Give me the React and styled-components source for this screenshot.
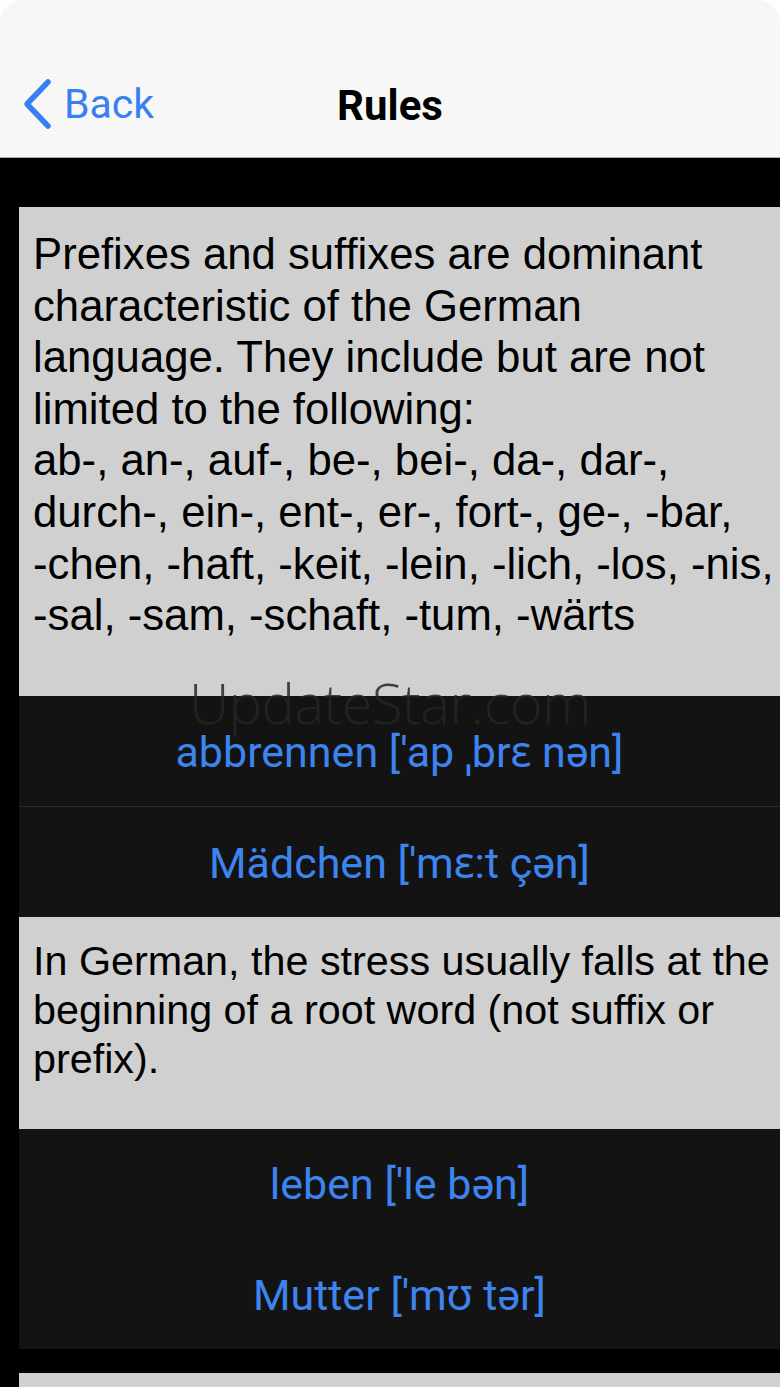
import React from 'react';
import styled, { createGlobalStyle } from 'styled-components';

const GlobalStyle = createGlobalStyle`
  html, body {
    margin: 0;
    padding: 0;
    background: #000;
  }
`;

const Screen = styled.div`
  position: relative;
  width: 780px;
  height: 1387px;
  overflow: hidden;
  background: #000;
  font-family: 'Liberation Sans', Arial, sans-serif;
`;

const NavShell = styled.div`
  background: #fff;
`;

const NavBar = styled.header`
  height: 158px;
  display: grid;
  grid-template-columns: 1fr auto 1fr;
  align-items: end;
  padding: 0 0 27px 0;
  box-sizing: border-box;
  background: #f7f7f8;
  border-radius: 22px 22px 0 0;
  border-bottom: 1px solid #a9a9ab;
`;

const BackButton = styled.button`
  justify-self: start;
  display: flex;
  align-items: center;
  gap: 12px;
  margin-left: 22px;
  padding: 0;
  border: 0;
  background: none;
  color: #3880f0;
  font-family: Roboto, 'Noto Sans', sans-serif;
  font-size: 41px;
  line-height: 48px;
  cursor: pointer;
`;

const Title = styled.h1`
  margin: 0;
  font-family: Roboto, 'Noto Sans', sans-serif;
  font-weight: 700;
  font-size: 42px;
  line-height: 48px;
  color: #000;
`;

const Content = styled.main`
  display: flex;
  flex-direction: column;
  padding: 49px 0 0 19px;
`;

const Note = styled.div`
  background: #d0d0d0;
  padding: ${(p) => p.$pad};
  margin-top: ${(p) => p.$gap || 0}px;
  color: #000;
  font-size: ${(p) => p.$size}px;
  line-height: ${(p) => p.$lh}px;
  min-height: ${(p) => p.$min || 0}px;
`;

const Affix = styled.span`
  white-space: nowrap;
`;

const Examples = styled.div`
  background: #131313;
  display: flex;
  flex-direction: column;
`;

const Example = styled.div`
  height: ${(p) => p.$h}px;
  display: flex;
  align-items: center;
  justify-content: center;
  border-top: ${(p) => (p.$divided ? '1px solid #2a2a2a' : '0')};
  color: #3d84ef;
  font-family: Roboto, 'Noto Sans', sans-serif;
  font-size: 43px;
`;

const Watermark = styled.div`
  position: absolute;
  top: 664px;
  left: 0;
  right: 0;
  text-align: center;
  font-family: 'Open Sans', sans-serif;
  font-weight: 300;
  font-size: 56px;
  letter-spacing: -0.5px;
  color: rgba(38, 38, 38, 0.85);
  pointer-events: none;
`;

const Chevron = () => (
  <svg width="30" height="52" viewBox="0 0 30 52">
    <path
      d="M26 4 L5 26 L26 48"
      fill="none"
      stroke="currentColor"
      strokeWidth="5.5"
      strokeLinecap="round"
      strokeLinejoin="round"
    />
  </svg>
);

const affixes = [
  'ab-', 'an-', 'auf-', 'be-', 'bei-', 'da-', 'dar-', 'durch-', 'ein-', 'ent-',
  'er-', 'fort-', 'ge-', '-bar', '-chen', '-haft', '-keit', '-lein', '-lich',
  '-los', '-nis', '-sal', '-sam', '-schaft', '-tum', '-wärts'
];

const App = () => {
  return (
    <Screen>
      <GlobalStyle />
      <NavShell>
        <NavBar>
          <BackButton>
            <Chevron />
            Back
          </BackButton>
          <Title>Rules</Title>
          <span />
        </NavBar>
      </NavShell>

      <Content>
        <Note $size={43.7} $lh={51.6} $pad="21px 2px 55px 14px">
          Prefixes and suffixes are dominant characteristic of the German language. They include but are not limited to the following:
          <br />
          {affixes.map((a, i) => (
            <React.Fragment key={a}>
              <Affix>{a + (i < affixes.length - 1 ? ',' : '')}</Affix>
              {i < affixes.length - 1 ? ' ' : ''}
            </React.Fragment>
          ))}
        </Note>
        <Examples>
          <Example $h={110}>abbrennen ['ap ˌbrɛ nən]</Example>
          <Example $h={110} $divided>Mädchen ['mɛ:t çən]</Example>
        </Examples>
        <Note $size={41.3} $lh={49} $pad="20px 2px 45px 14px">
          In German, the stress usually falls at the beginning of a root word (not suffix or prefix).
        </Note>
        <Examples>
          <Example $h={110}>leben ['le bən]</Example>
          <Example $h={110}>Mutter ['mʊ tər]</Example>
        </Examples>
        <Note $size={41.3} $lh={49} $pad="0" $gap={24} $min={40} />
      </Content>

      <Watermark>UpdateStar.com</Watermark>
    </Screen>
  );
};

export default App;
